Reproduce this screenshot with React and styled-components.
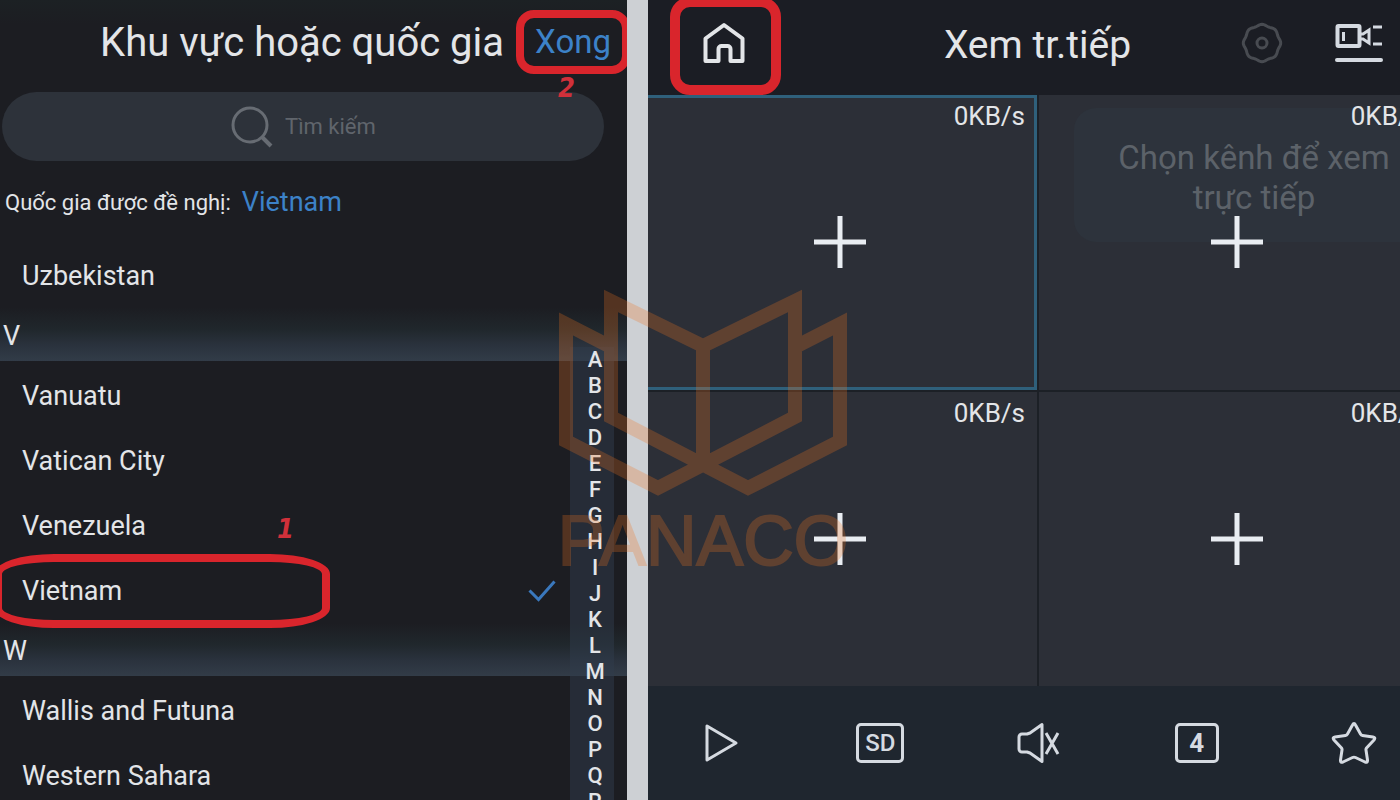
import React, { useState } from "react";
import styled, { createGlobalStyle, css } from "styled-components";

const sections = [
  { letter: "", countries: ["Uzbekistan"] },
  { letter: "V", countries: ["Vanuatu", "Vatican City", "Venezuela", "Vietnam"] },
  { letter: "W", countries: ["Wallis and Futuna", "Western Sahara"] },
];

const letters = "ABCDEFGHIJKLMNOPQR".split("");

// outline of the settings gear: a circle with eight shallow lobes
const gearPath = Array.from({ length: 96 }, (_, i) => {
  const angle = (i / 96) * Math.PI * 2;
  const r = 18 + Math.cos(angle * 8) * 0.7;
  return `${i ? "L" : "M"}${(21 + r * Math.cos(angle)).toFixed(2)} ${(21 + r * Math.sin(angle)).toFixed(2)}`;
}).join("") + "z";

const App = () => {
  const [selected, setSelected] = useState("Vietnam");
  const [activeCell, setActiveCell] = useState(0);

  return (
    <>
      <GlobalStyle />
      <Page>
        <RegionPanel>
          <RegionHeader>
            <h1>Khu vực hoặc quốc gia</h1>
            <DoneButton type="button">Xong</DoneButton>
            <Step $step="done">2</Step>
          </RegionHeader>
          <SearchBar>
            <svg width="42" height="42" viewBox="0 0 42 42" fill="none" stroke="currentColor" strokeWidth="3">
              <circle cx="19" cy="19" r="17" />
              <path d="M31 31l9 9" strokeWidth="4" />
            </svg>
            <input type="text" placeholder="Tìm kiếm" aria-label="Tìm kiếm" />
          </SearchBar>
          <Suggested>
            Quốc gia được đề nghị: <a href="#vietnam">Vietnam</a>
          </Suggested>
          <CountryList>
            {sections.map((section) => (
              <section key={section.letter}>
                {section.letter && <SectionTitle>{section.letter}</SectionTitle>}
                {section.countries.map((country) => (
                  <CountryRow key={country} type="button" onClick={() => setSelected(country)}>
                    {country}
                    {country === selected && (
                      <svg width="28" height="22" viewBox="0 0 28 22" fill="none" stroke="#3a78bd" strokeWidth="3">
                        <path d="M1.5 10.5l9 9L26.5 1.5" />
                      </svg>
                    )}
                    {country === "Vietnam" && <RowMark />}
                    {country === "Venezuela" && <Step $step="row">1</Step>}
                  </CountryRow>
                ))}
              </section>
            ))}
          </CountryList>
          <LetterIndex>
            {letters.map((letter) => (
              <span key={letter}>{letter}</span>
            ))}
          </LetterIndex>
        </RegionPanel>

        <LivePanel>
          <LiveContent>
            <LiveHeader>
              <HomeButton type="button" aria-label="Home">
                <svg width="42" height="42" viewBox="0 0 42 42" fill="none" stroke="currentColor" strokeWidth="4" strokeLinejoin="round">
                  <path d="M2.5 39V16.500L21 3l18.500 13.500V39H27.500V27a3 3 0 0 0-3-3h-6a3 3 0 0 0-3 3v12z" />
                </svg>
              </HomeButton>
              <h2>Xem tr.tiếp</h2>
              <HeaderActions>
                <IconButton type="button" aria-label="Settings" $dim>
                  <svg width="42" height="42" viewBox="0 0 42 42" fill="none" stroke="currentColor" strokeWidth="3" strokeLinejoin="round">
                    <path d={gearPath} />
                    <circle cx="21" cy="21" r="5" />
                  </svg>
                </IconButton>
                <IconButton type="button" aria-label="Camera">
                  <svg width="48" height="40" viewBox="0 0 48 40" fill="none" stroke="currentColor" strokeWidth="3">
                    <rect x="2.5" y="3" width="22" height="20" rx="1" strokeWidth="4" />
                    <path d="M8.5 9v9" />
                    <path d="M25 11h3l6-4v13l-6-4h-3M38 4h9M38 21h9" />
                    <path d="M2 37h44" strokeWidth="4" strokeLinecap="round" />
                  </svg>
                </IconButton>
              </HeaderActions>
            </LiveHeader>
            <VideoGrid>
              {[0, 1, 2, 3].map((cell) => (
                <VideoCell key={cell} type="button" $active={cell === activeCell} onClick={() => setActiveCell(cell)}>
                  {cell === 1 && <Toast>Chọn kênh để xem trực tiếp</Toast>}
                  <Rate>0KB/s</Rate>
                  <Plus width="52" height="52" viewBox="0 0 52 52" stroke="#e9edf2" strokeWidth="5">
                    <path d="M26 0v52M0 26h52" />
                  </Plus>
                </VideoCell>
              ))}
            </VideoGrid>
            <Toolbar>
              <IconButton type="button" aria-label="Play">
                <svg width="48" height="42" viewBox="0 0 48 42" fill="none" stroke="currentColor" strokeWidth="3" strokeLinejoin="round">
                  <path d="M10 4v34l29-17z" />
                </svg>
              </IconButton>
              <BoxButton type="button">SD</BoxButton>
              <IconButton type="button" aria-label="Mute">
                <svg width="48" height="42" viewBox="0 0 48 42" fill="none" stroke="currentColor" strokeWidth="3" strokeLinejoin="round">
                  <path d="M26 2.5v37L14 31l-3-1H6a3 3 0 0 1-3-3V15a3 3 0 0 1 3-3h5l3-1zM30 11l12 21M42 11L30 32" />
                </svg>
              </IconButton>
              <BoxButton type="button" $bold>4</BoxButton>
              <IconButton type="button" aria-label="Favorite">
                <svg width="48" height="44" viewBox="0 0 48 44" fill="none" stroke="currentColor" strokeWidth="3" strokeLinejoin="round">
                  <path d="M22.500 4q1.500-3 3 0L30.500 13q.7 1.200 2 1.400L43 16q3 .6 1 3L36.500 27q-.7.9-.5 2L37.500 39q.2 3-2.500 2L25.500 36.500q-1.500-.7-3 0L13 41q-2.700 1-2.500-2L12 29q.2-1.100-.5-2L4 19q-2-2.400 1-3L15.500 14.400q1.300-.2 2-1.400z" />
                </svg>
              </IconButton>
            </Toolbar>
          </LiveContent>
        </LivePanel>

        <Watermark>
          <svg width="288" height="208" viewBox="0 0 288 208" fill="none" stroke="currentColor" strokeWidth="14">
            <path d="M52 58L7 35v117l92 47 137-71V12l-92 45L52 12v116l137 71 92-47V35l-45 23M144 57v118" />
          </svg>
          <span>PANACO</span>
        </Watermark>
      </Page>
    </>
  );
};

const GlobalStyle = createGlobalStyle`
  * {
    box-sizing: border-box;
  }
  body {
    margin: 0;
    background: #cdd0d4;
    font-family: Roboto, "Liberation Sans", sans-serif;
    color: #e3e5e8;
  }
  h1, h2, p {
    margin: 0;
    font-weight: 400;
  }
  button {
    padding: 0;
    border: 0;
    background: none;
    color: inherit;
    font-family: inherit;
    cursor: pointer;
  }
`;

const Page = styled.main`
  position: relative;
  display: grid;
  grid-template-columns: 627fr 752fr;
  gap: 21px;
  height: 100vh;
  overflow: hidden;
`;

const RegionPanel = styled.section`
  position: relative;
  overflow: hidden;
  background: #1c1d22;
`;

const RegionHeader = styled.header`
  position: relative;
  display: flex;
  justify-content: flex-end;
  align-items: center;
  gap: 12px;
  height: 92px;
  padding-bottom: 8px;
  background: linear-gradient(#1c2124, #1c1d22 24px);
  h1 {
    font-size: 40px;
    white-space: nowrap;
  }
`;

const DoneButton = styled.button`
  width: 114px;
  height: 64px;
  margin-right: -3px;
  border: 8px solid #d9252c;
  border-radius: 18px;
  color: #3c82c8;
  font-size: 33px;
  line-height: 46px;
`;

// red step numbers that sit beside the framed controls
const Step = styled.span`
  position: absolute;
  color: #d0303a;
  font: italic bold 27px/32px "DejaVu Sans Condensed", "DejaVu Sans", sans-serif;
  ${({ $step }) =>
    $step === "done"
      ? css`
          right: 52px;
          bottom: -12px;
          z-index: 1;
        `
      : css`
          left: 277px;
          top: 20px;
        `}
`;

const SearchBar = styled.label`
  display: flex;
  justify-content: center;
  align-items: center;
  gap: 12px;
  height: 69px;
  margin: 0 23px 0 2px;
  border-radius: 35px;
  background: #2d323a;
  color: #676c73;
  input {
    width: 90px;
    padding: 0;
    border: 0;
    outline: 0;
    background: none;
    color: inherit;
    font: 22px Roboto, sans-serif;
    &::placeholder {
      color: #60656c;
    }
  }
`;

const Suggested = styled.p`
  display: flex;
  align-items: center;
  gap: 11px;
  height: 82px;
  padding-left: 5px;
  font-size: 22px;
  a {
    color: #3c82c8;
    font-size: 27px;
    text-decoration: none;
  }
`;

const CountryList = styled.div`
  display: flex;
  flex-direction: column;
`;

const SectionTitle = styled.h2`
  height: 53px;
  margin-bottom: 2px;
  padding: 0 3px;
  background: linear-gradient(#1c1d22, #20272c 40%, #2a323d 70%, #323c48);
  font-size: 27px;
  line-height: 56px;
`;

const CountryRow = styled.button`
  position: relative;
  display: flex;
  align-items: center;
  justify-content: space-between;
  width: 100%;
  height: 65px;
  padding: 0 71px 0 22px;
  font-size: 27px;
  text-align: left;
`;

const RowMark = styled.span`
  position: absolute;
  left: -6px;
  top: -4px;
  width: 336px;
  height: 74px;
  border: 8px solid #d9252c;
  border-radius: 60px / 20px;
`;

const LetterIndex = styled.nav`
  position: absolute;
  top: 347px;
  right: 13px;
  display: flex;
  flex-direction: column;
  width: 44px;
  padding-left: 6px;
  background: rgba(47, 60, 76, 0.5);
  font-size: 22px;
  font-weight: 500;
  line-height: 26px;
  text-align: center;
`;

const LivePanel = styled.section`
  overflow: hidden;
  background: #1c2026;
`;

// runs past both edges of the panel
const LiveContent = styled.div`
  display: flex;
  flex-direction: column;
  width: calc(100% + 40px);
  height: 100%;
  margin-left: -6px;
`;

const LiveHeader = styled.header`
  display: grid;
  grid-template-columns: 1fr auto 1fr;
  grid-template-rows: 85px;
  align-items: center;
  height: 95px;
  padding: 0 51px 0 50px;
  background: #1b1d24;
  h2 {
    padding-top: 4px;
    font-size: 39px;
  }
`;

const HomeButton = styled.button`
  display: flex;
  justify-content: center;
  align-items: center;
  width: 111px;
  height: 98px;
  margin: 0 0 -7px -22px;
  padding: 0 4px 6px 0;
  border: 10px solid #d9252c;
  border-radius: 20px;
`;

const HeaderActions = styled.div`
  display: flex;
  justify-content: flex-end;
  gap: 52px;
`;

const IconButton = styled.button`
  display: flex;
  align-items: center;
  color: ${({ $dim }) => ($dim ? "#484b51" : "#d5dae1")};
`;

const VideoGrid = styled.div`
  display: grid;
  grid-template-columns: 1fr 1fr;
  grid-template-rows: 1fr 1fr;
  flex: 1;
  gap: 2px;
`;

const VideoCell = styled.button`
  position: relative;
  display: flex;
  justify-content: center;
  align-items: center;
  border: 3px solid ${({ $active }) => ($active ? "#2f607b" : "#2c2f37")};
  background: #2c2f37;
`;

const Rate = styled.span`
  position: absolute;
  top: 3px;
  right: 9px;
  font-size: 26px;
  line-height: 30px;
`;

const Plus = styled.svg`
  position: relative;
`;

const Toast = styled.span`
  position: absolute;
  top: 10px;
  left: 32px;
  width: 360px;
  padding: 30px 30px 24px;
  border-radius: 22px;
  background: #2d333c;
  color: #5c6269;
  font-size: 33px;
  line-height: 40px;
`;

const Toolbar = styled.footer`
  display: flex;
  justify-content: space-between;
  align-items: center;
  height: 114px;
  padding: 0 56px 0 55px;
  background: #1f262f;
`;

const BoxButton = styled.button`
  width: ${({ $bold }) => ($bold ? 44 : 48)}px;
  height: 40px;
  border: 3px solid #d5dae1;
  border-radius: 5px;
  color: #d5dae1;
  font-size: ${({ $bold }) => ($bold ? 26 : 24)}px;
  font-weight: ${({ $bold }) => ($bold ? 700 : 500)};
  line-height: 30px;
`;

const Watermark = styled.div`
  position: absolute;
  top: 289px;
  left: 50%;
  display: flex;
  flex-direction: column;
  align-items: center;
  width: 288px;
  margin-left: -141px;
  color: #f07420;
  opacity: 0.26;
  pointer-events: none;
  span {
    font-family: "Liberation Sans", sans-serif;
    font-size: 70px;
    line-height: 88px;
    -webkit-text-stroke: 2px currentColor;
  }
`;

export default App;
